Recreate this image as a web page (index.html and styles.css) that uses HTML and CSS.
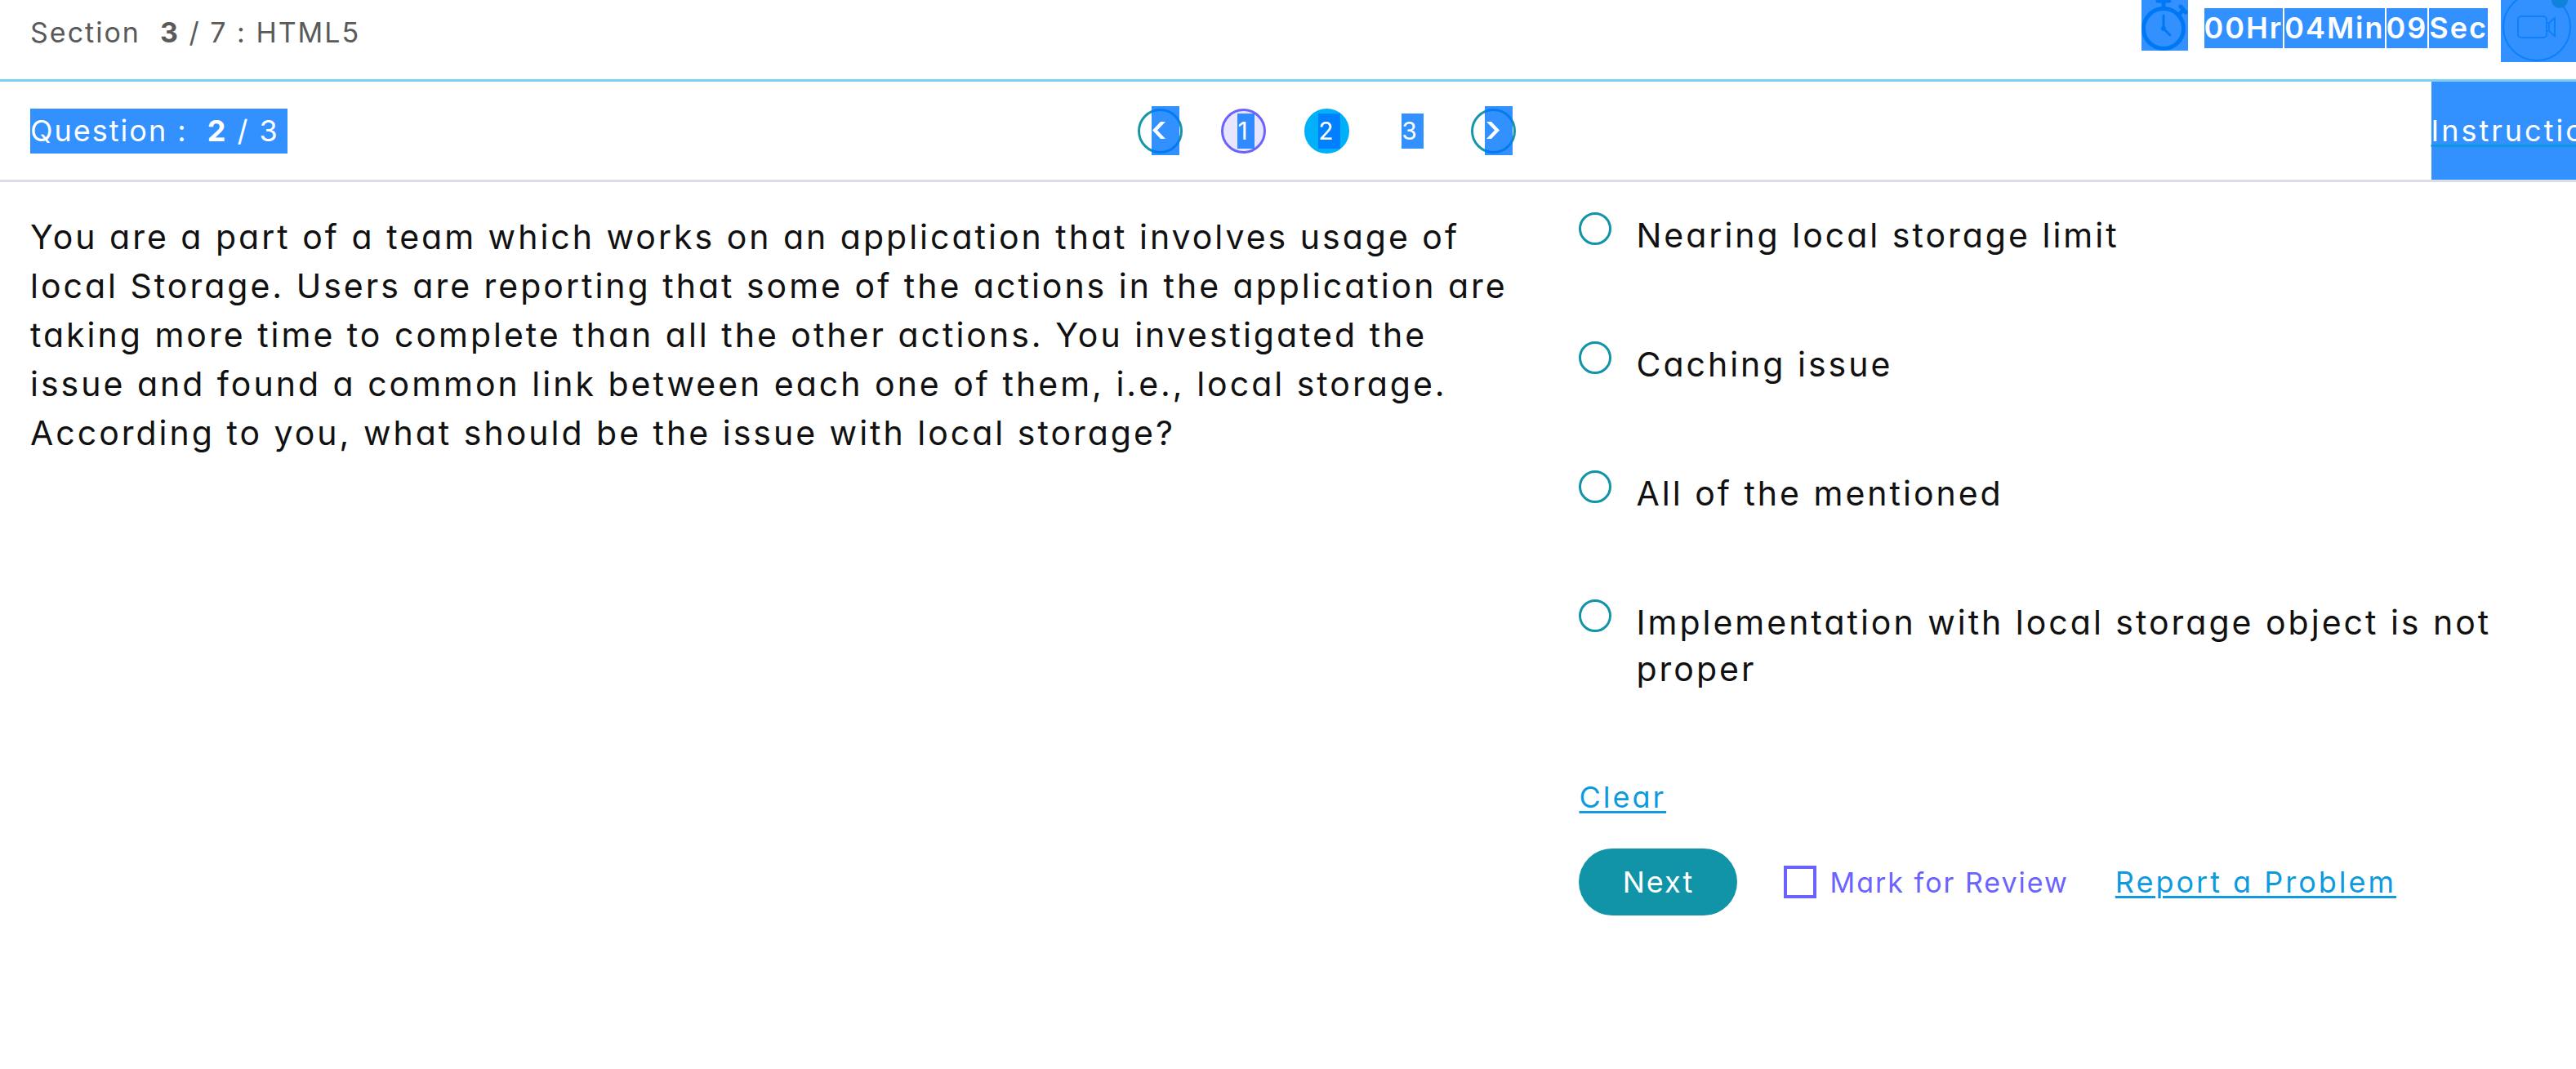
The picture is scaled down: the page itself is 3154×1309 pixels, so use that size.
FILE: index.html
```html
<!DOCTYPE html>
<html lang="en">
<head>
<meta charset="utf-8">
<meta name="viewport" content="width=device-width, initial-scale=1">
<title>HTML5 test</title>
<link rel="stylesheet" href="styles.css">
</head>
<body>
<header class="topbar">
  <p class="section-label"><span>Section</span><span><b>3</b> / 7 : HTML5</span></p>
  <div class="status">
    <span class="mark clock">
      <svg width="57" height="62" viewBox="0 0 57 62" fill="none" stroke="#0078f5" stroke-width="5" stroke-linecap="round" aria-hidden="true">
        <circle cx="27" cy="35" r="24.5"/>
        <path d="M20 1h14M27 2v8M48 8l6 7M46 18l5-6" />
        <path d="M27 19v16l8 8" stroke-width="3"/>
        <circle cx="27" cy="35" r="1.5" stroke-width="3"/>
      </svg>
    </span>
    <div class="timer">
      <span class="mark">00Hr</span><span class="mark">04Min</span><span class="mark">09</span><span class="mark">Sec</span>
    </div>
    <span class="mark camera">
      <svg width="92" height="76" viewBox="0 0 92 76" fill="none" stroke="#0d80fa" stroke-width="2" aria-hidden="true">
        <circle cx="44" cy="33" r="41"/>
        <rect x="21" y="20" width="35" height="26" rx="4"/>
        <path d="M56 28h3l7-6v22l-7-6h-3M59 28v10"/>
        <circle cx="72" cy="0" r="10" fill="#0f82dc" stroke="none"/>
      </svg>
    </span>
  </div>
</header>
<nav class="question-bar">
  <p class="question-label mark"><span>Question :</span><span><b>2</b> / 3</span></p>
  <div class="pager">
    <button class="page arrow" type="button" aria-label="Previous question"><span class="mark"><svg width="18" height="22" viewBox="0 0 18 22" aria-hidden="true"><path d="M11 0h6L7 10.500L17 21h-6L1 10.500z" fill="#fff"/></svg></span></button>
    <button class="page review" type="button"><span class="mark">1</span></button>
    <button class="page current" type="button"><span class="mark">2</span></button>
    <button class="page plain" type="button"><span class="mark">3</span></button>
    <button class="page arrow" type="button" aria-label="Next question"><span class="mark"><svg width="18" height="22" viewBox="0 0 18 22" aria-hidden="true"><path d="M8 0H2l10 10.500L2 21h6l10-10.500z" fill="#fff"/></svg></span></button>
  </div>
  <a class="instructions mark" href="#instructions">Instructions</a>
</nav>
<main class="content">
  <p class="question">You are a part of a team which works on an application that involves usage of local Storage. Users are reporting that some of the actions in the application are taking more time to complete than all the other actions. You investigated the issue and found a common link between each one of them, i.e., local storage. According to you, what should be the issue with local storage?</p>
  <form class="answers">
    <div class="option"><input type="radio" name="answer" id="a1"><label for="a1">Nearing local storage limit</label></div>
    <div class="option"><input type="radio" name="answer" id="a2"><label for="a2">Caching issue</label></div>
    <div class="option"><input type="radio" name="answer" id="a3"><label for="a3">All of the mentioned</label></div>
    <div class="option"><input type="radio" name="answer" id="a4"><label for="a4">Implementation with local storage object is not proper</label></div>
    <a class="link clear" href="#clear">Clear</a>
    <div class="actions">
      <button class="next" type="button">Next</button>
      <div class="review-toggle"><input type="checkbox" id="review"><label for="review">Mark for Review</label></div>
      <a class="link" href="#report">Report a Problem</a>
    </div>
  </form>
</main>
</body>
</html>
```
FILE: styles.css
```css
* {
  box-sizing: border-box;
}

html {
  overflow: hidden;
}

body {
  margin: 0;
  background: #fff;
  color: #111;
  font-family: Inter, "Noto Sans", sans-serif;
  font-size: 36px;
  font-weight: 400;
  font-feature-settings: "cv11";
  letter-spacing: 2px;
  overflow-x: hidden;
}

p {
  margin: 0;
}

button,
input {
  margin: 0;
  font: inherit;
  font-feature-settings: inherit;
  letter-spacing: inherit;
}

b {
  font-weight: 700;
}

/* Selected text and images */
.mark {
  background: rgba(0, 116, 255, 0.8);
  color: #fff;
}

.topbar {
  display: flex;
  align-items: flex-start;
  justify-content: space-between;
  height: 100px;
  padding-left: 37px;
  border-bottom: 3px solid #77d0f2;
}

.section-label {
  display: flex;
  gap: 24px;
  color: #5a5a5a;
  font-size: 34px;
  line-height: 80px;
}

.status {
  display: flex;
  align-items: flex-start;
}

.clock,
.camera {
  display: flex;
}

.timer {
  display: flex;
  gap: 2px;
  margin: 10px 16px 0 20px;
  font-weight: 600;
  line-height: 49px;
}

.question-bar {
  display: grid;
  grid-template-columns: 1fr auto 1fr;
  align-items: center;
  width: calc(100% + 95px);
  height: 123px;
  padding: 0 37px;
  border-bottom: 3px solid #dcdbe8;
}

.question-label {
  display: flex;
  gap: 24px;
  justify-self: start;
  padding-right: 10px;
  line-height: 55px;
}

.pager {
  display: flex;
  gap: 47px;
}

.page {
  display: flex;
  align-items: center;
  justify-content: center;
  width: 55px;
  height: 55px;
  padding: 0 0 0 6px;
  border: 3px solid transparent;
  border-radius: 50%;
  background: none;
  font-size: 30px;
  line-height: 43px;
}

.page.arrow {
  padding-left: 12px;
  border-color: #1696a8;
}

.page.review {
  border-color: #6c63ff;
  background: #e8e6ff;
}

.page.current {
  border-color: #00b0f8;
  background: #00b0f8;
}

.page .mark {
  padding-right: 6px;
}

.arrow .mark {
  display: flex;
  flex: none;
  align-items: center;
  width: 34px;
  height: 60px;
}

.instructions {
  justify-self: end;
  letter-spacing: 3px;
  line-height: 120px;
  text-decoration: underline #0a99dc 3px;
  text-underline-offset: 4px;
}

.content {
  display: grid;
  grid-template-columns: 31fr 20fr;
  gap: 62px;
  padding: 37px 37px 0;
}

.question {
  font-size: 41px;
  letter-spacing: 3px;
  line-height: 60px;
}

.answers {
  display: flex;
  flex-direction: column;
  align-items: flex-start;
}

.option {
  display: flex;
  align-items: flex-start;
  gap: 30px;
  margin-bottom: 101px;
  font-size: 41px;
  letter-spacing: 3px;
  line-height: 57px;
}

.option input {
  flex: none;
  appearance: none;
  width: 40px;
  height: 40px;
  border: 3px solid #1193a8;
  border-radius: 50%;
}

.link {
  color: #0e9adf;
  letter-spacing: 3px;
  line-height: 54px;
  text-decoration: underline 3px;
  text-underline-offset: 4px;
}

.actions {
  display: flex;
  align-items: center;
  margin-top: 36px;
}

.next {
  width: 194px;
  height: 82px;
  margin-right: 57px;
  padding: 0;
  border: 0;
  border-radius: 41px;
  background: #1193a8;
  color: #fff;
}

.review-toggle {
  display: flex;
  align-items: center;
  gap: 16px;
  margin-right: 57px;
  color: #6c63ff;
  font-size: 34px;
}

.review-toggle input {
  appearance: none;
  width: 40px;
  height: 40px;
  border: 4px solid #6c63ff;
}
```
